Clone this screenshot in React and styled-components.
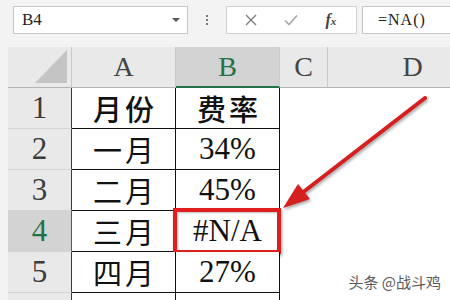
import React from 'react'
import styled, { createGlobalStyle } from 'styled-components'

const GlobalStyle = createGlobalStyle`
  html, body {
    margin: 0;
    padding: 0;
    background: #f3f3f3;
    overflow: hidden;
  }
`

const SERIF = `"Liberation Serif", "Noto Sans CJK SC", serif`

const Page = styled.div`
  position: relative;
  width: 450px;
  height: 300px;
  overflow: hidden;
  background: #f3f3f3;
  font-family: ${SERIF};
`

const FormulaBar = styled.div`
  height: 40px;
  display: flex;
  align-items: center;
  padding-left: 13px;
  box-sizing: border-box;
`

const NameBox = styled.div`
  width: 175px;
  height: 28px;
  box-sizing: border-box;
  background: #fff;
  border: 1px solid #c6c6c6;
  display: flex;
  align-items: center;
  justify-content: space-between;
  padding: 0 7px 0 8px;
  font-size: 17px;
  color: #222;
`

const Caret = styled.span`
  width: 0;
  height: 0;
  border-left: 4px solid transparent;
  border-right: 4px solid transparent;
  border-top: 4px solid #555;
`

const Dots = styled.div`
  width: 38px;
  display: flex;
  flex-direction: column;
  align-items: center;
  gap: 2px;

  span {
    width: 2px;
    height: 2px;
    background: #777;
  }
`

const ActionBox = styled.div`
  width: 131px;
  height: 28px;
  box-sizing: border-box;
  background: #fff;
  border: 1px solid #d0d0d0;
  display: flex;
  align-items: center;
  justify-content: space-around;
  padding: 0 6px 0 4px;
`

const Fx = styled.span`
  font-style: italic;
  font-weight: 700;
  font-size: 16px;
  color: #444;

  small {
    font-size: 11px;
  }
`

const FormulaInput = styled.div`
  flex: 1;
  margin-left: 5px;
  height: 28px;
  box-sizing: border-box;
  background: #fff;
  border: 1px solid #c6c6c6;
  border-right: none;
  display: flex;
  align-items: center;
  padding-left: 15px;
  font-size: 16px;
  letter-spacing: 1px;
  color: #222;
`

const Sheet = styled.div`
  margin-top: 7px;
  margin-left: 8px;
  display: grid;
  grid-template-columns: 64px 104px 104px 48px 170px;
  grid-auto-rows: 41px;
  background: #fff;
`

const ColHead = styled.div`
  position: relative;
  display: flex;
  align-items: center;
  justify-content: center;
  background: ${p => (p.$selected ? '#d3d3d3' : '#e9e9e9')};
  color: ${p => (p.$selected ? '#217346' : '#444')};
  border-right: 1px solid #c9c9c9;
  border-bottom: ${p => (p.$selected ? '2px solid #217346' : '1px solid #b5b5b5')};
  box-sizing: border-box;
  font-size: 28px;

  ${p => p.$corner && `
    &::after {
      content: '';
      position: absolute;
      right: 4px;
      bottom: 4px;
      width: 32px;
      height: 33px;
      background: #c4c4c4;
      clip-path: polygon(100% 0, 100% 100%, 0 100%);
    }
  `}
`

const RowHead = styled.div`
  display: flex;
  align-items: center;
  justify-content: center;
  background: ${p => (p.$selected ? '#d3d3d3' : '#e9e9e9')};
  color: ${p => (p.$selected ? '#217346' : '#3c3c3c')};
  border-bottom: 1px solid #d2d2d2;
  border-right: 1px solid ${p => (p.$selected ? '#217346' : '#3a3a3a')};
  box-sizing: border-box;
  font-size: 31px;
`

const Cell = styled.div`
  position: relative;
  display: flex;
  align-items: center;
  justify-content: center;
  background: #fff;
  color: #111;
  box-sizing: border-box;
  border-right: 1px solid #111;
  border-bottom: 1px solid #111;
  font-size: ${p => (p.$cjk ? '29px' : '31px')};
  font-weight: ${p => (p.$bold ? 500 : 400)};
  letter-spacing: ${p => (p.$cjk ? '3px' : '0')};
  padding-left: ${p => (p.$cjk ? '3px' : '0')};
`

const Blank = styled.div`
  background: #fff;
`

const Highlight = styled.div`
  position: absolute;
  left: -3px;
  right: -2px;
  top: -3px;
  bottom: -3px;
  border: 4px solid #e01e1e;
  box-shadow: 1px 2px 3px rgba(0, 0, 0, 0.35), inset 1px 1px 2px rgba(0, 0, 0, 0.25);
`

const Arrow = styled.svg`
  position: absolute;
  left: 0;
  top: 0;
  pointer-events: none;
  filter: drop-shadow(1px 2px 1.5px rgba(0, 0, 0, 0.35));
`

const Watermark = styled.div`
  position: absolute;
  right: 9px;
  bottom: 8px;
  font-family: "Noto Sans CJK SC", sans-serif;
  font-size: 15px;
  color: #5a5a5a;
  text-shadow: 0 0 2px #fff;
`

const rows = [
  { n: 1, a: '月份', b: '费率', header: true },
  { n: 2, a: '一月', b: '34%' },
  { n: 3, a: '二月', b: '45%' },
  { n: 4, a: '三月', b: '#N/A', selected: true },
  { n: 5, a: '四月', b: '27%' },
  { n: 6, a: '', b: '' }
]

const App = () => (
  <Page>
    <GlobalStyle />
    <FormulaBar>
      <NameBox>
        B4
        <Caret />
      </NameBox>
      <Dots>
        <span />
        <span />
        <span />
      </Dots>
      <ActionBox>
        <svg width="12" height="12" viewBox="0 0 12 12">
          <path d="M1 1 L11 11 M11 1 L1 11" stroke="#7d7d7d" strokeWidth="1.4" />
        </svg>
        <svg width="14" height="12" viewBox="0 0 14 12">
          <path d="M1 6.5 L5 10.5 L13 1.5" stroke="#a8a8a8" strokeWidth="1.6" fill="none" />
        </svg>
        <Fx>f<small>x</small></Fx>
      </ActionBox>
      <FormulaInput>=NA()</FormulaInput>
    </FormulaBar>

    <Sheet>
      <ColHead $corner />
      <ColHead>A</ColHead>
      <ColHead $selected>B</ColHead>
      <ColHead>C</ColHead>
      <ColHead>D</ColHead>

      {rows.map(r => (
        <React.Fragment key={r.n}>
          <RowHead $selected={r.selected}>{r.n}</RowHead>
          <Cell $cjk $bold={r.header}>{r.a}</Cell>
          <Cell $cjk={r.header} $bold={r.header}>
            {r.b}
            {r.selected && <Highlight />}
          </Cell>
          <Blank />
          <Blank />
        </React.Fragment>
      ))}
    </Sheet>

    <Arrow width="450" height="300" viewBox="0 0 450 300">
      <line x1="425" y1="98" x2="302" y2="193" stroke="#d61f1f" strokeWidth="4" strokeLinecap="round" />
      <polygon points="283,208 298,184 310,199" fill="#d61f1f" />
    </Arrow>

    <Watermark>头条 @战斗鸡</Watermark>
  </Page>
)

export default App
